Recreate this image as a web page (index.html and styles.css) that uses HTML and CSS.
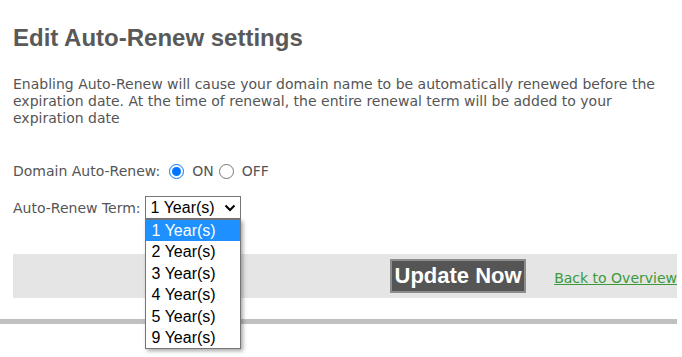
FILE: index.html
```html
<!DOCTYPE html>
<html>
<head>
<meta charset="utf-8">
<link rel="stylesheet" href="styles.css">
</head>
<body>
<div class="page">
  <h1 class="title">Edit Auto-Renew settings</h1>
  <p class="intro">Enabling Auto-Renew will cause your domain name to be automatically renewed before the expiration date. At the time of renewal, the entire renewal term will be added to your expiration date</p>

  <div class="row row-renew">
    <span class="label">Domain Auto-Renew:</span>
    <label class="opt"><input type="radio" name="ar" checked>ON</label>
    <label class="opt"><input type="radio" name="ar">OFF</label>
  </div>

  <div class="row row-term">
    <span class="label">Auto-Renew Term:</span>
    <div class="select-wrap">
      <div class="select">
        <span>1 Year(s)</span>
        <svg class="chev" width="12" height="8" viewBox="0 0 12 8"><path d="M1.5 1.5 L6 6 L10.5 1.5" fill="none" stroke="#000" stroke-width="2"/></svg>
      </div>
      <ul class="dropdown">
        <li class="active">1 Year(s)</li>
        <li>2 Year(s)</li>
        <li>3 Year(s)</li>
        <li>4 Year(s)</li>
        <li>5 Year(s)</li>
        <li>9 Year(s)</li>
      </ul>
    </div>
  </div>

  <div class="actions">
    <button class="btn">Update Now</button>
    <a class="back" href="#">Back to Overview</a>
  </div>

  <div class="rule"></div>
</div>
</body>
</html>
```
FILE: styles.css
```css
html, body {
  margin: 0;
  padding: 0;
  background: #fff;
}
.page {
  width: 677px;
  min-height: 357px;
  overflow: hidden;
  font-family: "DejaVu Sans", Verdana, sans-serif;
  font-size: 14px;
  color: #555;
}
.title {
  margin: 24px 0 0 13px;
  font-family: "Liberation Sans", Arial, sans-serif;
  font-size: 24px;
  line-height: 28px;
  font-weight: bold;
  color: #595959;
}
.intro {
  margin: 24px 0 0 13px;
  line-height: 17px;
  width: 652px;
}
.row {
  display: flex;
  align-items: center;
  margin-left: 13px;
}
.row-renew {
  margin-top: 34px;
  height: 20px;
}
.row-renew .label {
  margin-right: 9px;
}
.opt {
  display: flex;
  align-items: center;
  margin-right: 5px;
}
.opt input {
  width: 15px;
  height: 15px;
  margin: 0 8px 0 0;
  accent-color: #0075ff;
}
.row-term {
  margin-top: 15px;
  height: 23px;
}
.row-term .label {
  margin-right: 4px;
}
.select-wrap {
  position: relative;
}
.select {
  box-sizing: border-box;
  width: 96px;
  height: 23px;
  border: 1px solid #767676;
  display: flex;
  align-items: center;
  justify-content: space-between;
  padding: 0 4px 0 5px;
  font-family: "Liberation Sans", Arial, sans-serif;
  font-size: 16px;
  color: #000;
}
.chev {
  display: block;
}
.dropdown {
  position: absolute;
  left: 0;
  top: 23px;
  width: 96px;
  box-sizing: border-box;
  margin: 0;
  padding: 0;
  list-style: none;
  background: #fff;
  border: 1px solid #767676;
  box-shadow: 2px 2px 4px rgba(0, 0, 0, 0.35);
  font-family: "Liberation Sans", Arial, sans-serif;
  font-size: 16px;
  color: #000;
  z-index: 5;
}
.dropdown li {
  height: 21.4px;
  line-height: 21.4px;
  padding-left: 6px;
}
.dropdown li.active {
  background: #1e90ff;
  color: #fff;
}
.actions {
  margin: 35px 0 0 13px;
  height: 44px;
  background: #e5e5e5;
  display: flex;
  align-items: center;
  padding-left: 377px;
  white-space: nowrap;
}
.btn {
  height: 34px;
  width: 138px;
  padding: 0;
  background: #555;
  border: 2px solid #8c8c8c;
  color: #fff;
  font-family: "Liberation Sans", Arial, sans-serif;
  font-weight: bold;
  font-size: 22px;
}
.back {
  margin-left: 28px;
  margin-top: 4px;
  color: #3a9a3a;
  text-decoration: underline;
}
.rule {
  margin-top: 21px;
  height: 5px;
  background: #c0c0c0;
}
```
